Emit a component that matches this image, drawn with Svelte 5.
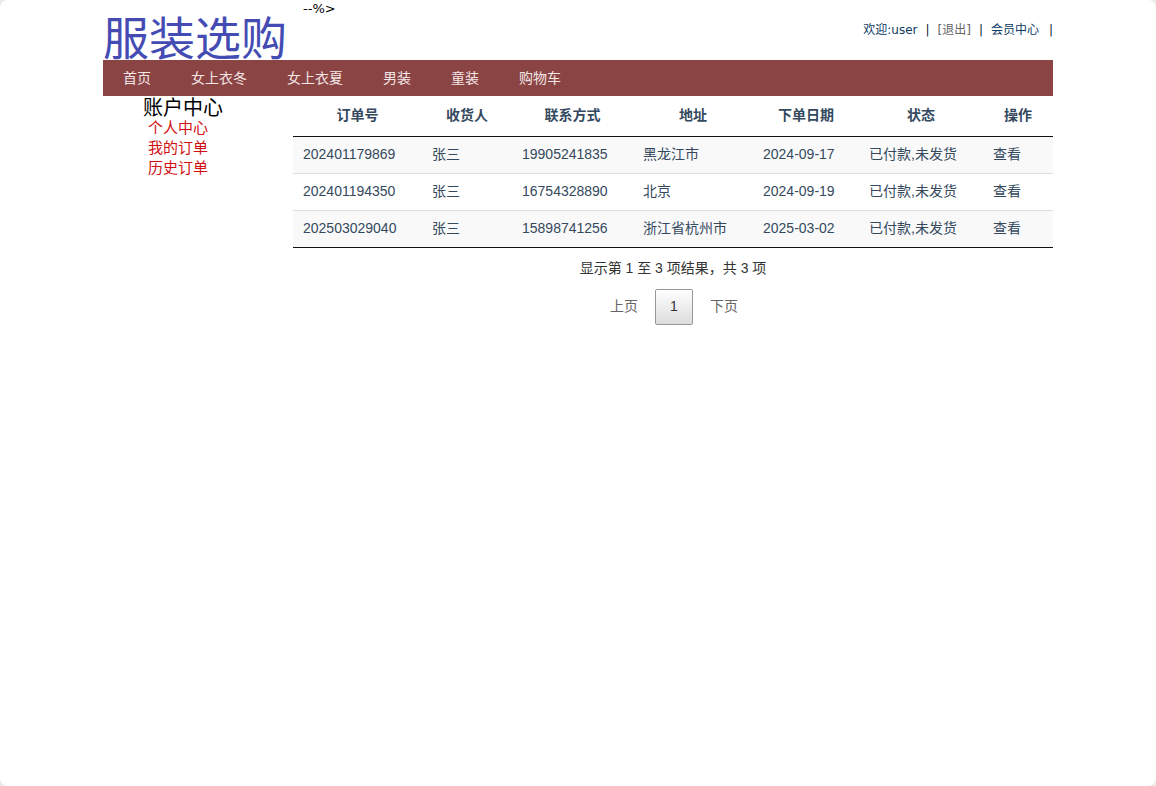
<script lang="ts">
  const categories = ["首页", "女上衣冬", "女上衣夏", "男装", "童装", "购物车"];
  const accountLinks = ["个人中心", "我的订单", "历史订单"];
  const columns = ["订单号", "收货人", "联系方式", "地址", "下单日期", "状态", "操作"];

  const orders = [
    { id: "202401179869", name: "张三", phone: "19905241835", address: "黑龙江市", date: "2024-09-17", status: "已付款,未发货" },
    { id: "202401194350", name: "张三", phone: "16754328890", address: "北京", date: "2024-09-19", status: "已付款,未发货" },
    { id: "202503029040", name: "张三", phone: "15898741256", address: "浙江省杭州市", date: "2025-03-02", status: "已付款,未发货" },
  ];

  let page = $state(1);
</script>

<div class="page">
  <div class="container">
    <header>
      <a class="logo" href="#home">服装选购</a>
      <span class="stray">--%&gt;</span>
      <div class="user">
        <a href="#user">欢迎:user</a>
        <span>|</span>
        <a class="logout" href="#logout">[退出]</a>
        <span>|</span>
        <a class="member" href="#member">会员中心</a>
        <span>|</span>
      </div>
    </header>

    <nav>
      {#each categories as item}
        <a href="#category">{item}</a>
      {/each}
    </nav>

    <div class="body">
      <!-- 账户菜单 -->
      <aside>
        <h2>账户中心</h2>
        <ul>
          {#each accountLinks as item}
            <li><a href="#account">{item}</a></li>
          {/each}
        </ul>
      </aside>

      <!-- 订单列表 -->
      <main>
        <table>
          <thead>
            <tr>
              {#each columns as col}
                <th>{col}</th>
              {/each}
            </tr>
          </thead>
          <tbody>
            {#each orders as order}
              <tr>
                <td>{order.id}</td>
                <td>{order.name}</td>
                <td>{order.phone}</td>
                <td>{order.address}</td>
                <td>{order.date}</td>
                <td>{order.status}</td>
                <td><a href="#detail">查看</a></td>
              </tr>
            {/each}
          </tbody>
        </table>
        <p class="info">显示第 1 至 3 项结果，共 3 项</p>
        <div class="paginate">
          <button>上页</button>
          <button class:current={page === 1} onclick={() => (page = 1)}>1</button>
          <button>下页</button>
        </div>
      </main>
    </div>
  </div>
</div>

<style>
  :global(body) {
    margin: 0;
    background: #ebebeb;
  }
  .page {
    min-height: 100vh;
    background: #fff;
    border-radius: 8px;
    font-family: "Liberation Sans", "Noto Sans CJK SC", sans-serif;
    font-size: 14px;
    line-height: 20px;
    color: #333;
  }
  .container {
    max-width: 950px;
    margin: 0 auto;
  }
  a {
    color: inherit;
    text-decoration: none;
  }
  header {
    display: flex;
    height: 60px;
    font-family: "DejaVu Sans", "Noto Sans CJK SC", sans-serif;
    font-size: 12px;
    color: #000;
  }
  .logo {
    width: 200px;
    padding-top: 12px;
    box-sizing: border-box;
    font-family: "Noto Sans CJK SC", sans-serif;
    font-size: 46px;
    font-weight: 400;
    line-height: 46px;
    white-space: nowrap;
    color: #444cb4;
  }
  .stray {
    font-size: 13px;
    line-height: 18px;
  }
  .user {
    display: flex;
    gap: 8px;
    height: 20px;
    margin-left: auto;
    padding-top: 20px;
    color: #001c33;
  }
  .user a {
    color: #0c3a63;
  }
  .user .logout {
    color: #666;
  }
  .user .member {
    margin-right: 2px;
  }
  nav {
    display: flex;
    background: #8b4444;
  }
  nav a {
    padding: 8px 20px;
    color: #f3e6e6;
  }
  .body {
    display: flex;
  }
  aside {
    flex: none;
    width: 190px;
  }
  h2 {
    margin: 0;
    padding: 2px 0 0 40px;
    font-size: 20px;
    font-weight: 400;
    line-height: 20px;
    color: #000;
  }
  ul {
    margin: 0;
    padding: 0 0 0 45px;
    list-style: none;
    font-size: 15px;
    color: #d01010;
  }
  main {
    flex: 1;
  }
  table {
    width: 100%;
    table-layout: fixed;
    border-collapse: separate;
    border-spacing: 0;
    border-bottom: 1px solid #111;
    color: #34495e;
  }
  th {
    padding: 9px 10px 11px;
    border-bottom: 1px solid #111;
    font-weight: 700;
  }
  th:nth-child(1) {
    width: 109px;
  }
  th:nth-child(2) {
    width: 70px;
  }
  th:nth-child(3) {
    width: 101px;
  }
  th:nth-child(4) {
    width: 100px;
  }
  th:nth-child(5) {
    width: 86px;
  }
  th:nth-child(6) {
    width: 104px;
  }
  th:nth-child(7) {
    width: 50px;
  }
  td {
    padding: 7px 10px 9px;
    border-top: 1px solid #ddd;
  }
  tbody tr:first-child td {
    border-top: none;
  }
  tbody tr:nth-child(odd) {
    background: #f9f9f9;
  }
  .info {
    margin: 0;
    padding-top: 10px;
    text-align: center;
  }
  .paginate {
    display: flex;
    justify-content: center;
    gap: 2px;
    padding: 11px 0 0 2px;
  }
  button {
    padding: 6px 14px 8px;
    border: 1px solid transparent;
    border-radius: 2px;
    background: none;
    font: inherit;
    color: #666;
    cursor: pointer;
  }
  button.current {
    min-width: 38px;
    border-color: #979797;
    background: linear-gradient(to bottom, #fff 0%, #dcdcdc 100%);
    color: #333;
  }
</style>
